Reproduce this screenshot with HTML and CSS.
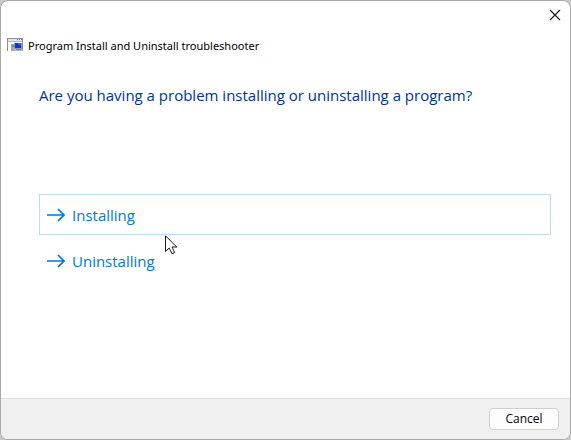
FILE: index.html
```html
<!DOCTYPE html>
<html lang="en">
<head>
    <meta charset="UTF-8" />
    <meta name="viewport" content="width=device-width, initial-scale=1.0" />
    <title>Program Install and Uninstall troubleshooter</title>
    <link rel="stylesheet" href="styles.css">
</head>
<body>
    <main class="dialog">
        <!-- Title bar -->
        <div class="title-bar">
            <button type="button" class="close-btn" aria-label="Close">
                <svg width="12" height="12" viewBox="0 0 12 12" fill="none" stroke="#1a1a1a" stroke-width="1.2">
                    <path d="M1 1L11 11M11 1L1 11" />
                </svg>
            </button>
        </div>

        <header class="dialog-header">
            <svg class="app-icon" width="16" height="14" viewBox="0 0 16 14" shape-rendering="crispEdges">
                <rect width="16" height="13" fill="#8c9097" />
                <rect x="1" y="1" width="14" height="2" fill="#e3e7ec" />
                <rect x="10" y="1" width="1" height="1" fill="#70757d" />
                <rect x="12" y="1" width="1" height="1" fill="#70757d" />
                <rect x="14" y="1" width="1" height="1" fill="#70757d" />
                <rect x="1" y="3" width="14" height="1" fill="#b4b8be" />
                <rect x="1" y="4" width="14" height="9" fill="#fff" />
                <rect x="4" y="6" width="3" height="7" fill="#a4a8ae" />
                <rect x="5" y="7" width="2" height="2" fill="#20c020" />
                <rect x="7" y="5" width="8" height="6" fill="#8495d8" />
                <rect x="8" y="5" width="6" height="5" fill="#1730c5" />
                <rect x="11" y="5" width="3" height="2" fill="#405be8" />
                <rect x="7" y="11" width="8" height="2" fill="#b9bdc6" />
                <rect x="9" y="11" width="5" height="1" fill="#777d8c" />
            </svg>
            <span>Program Install and Uninstall troubleshooter</span>
        </header>

        <!-- Question -->
        <section class="dialog-content">
            <h1 class="question">Are you having a problem installing or uninstalling a program?</h1>
            <div class="choices">
                <button type="button" class="choice active">
                    <svg width="18" height="14" viewBox="0 0 18 14" fill="none" stroke="#0078d7" stroke-width="1.7">
                        <path d="M0 7H17M11 1L17 7L11 13" />
                    </svg>
                    <span>Installing</span>
                </button>
                <button type="button" class="choice">
                    <svg width="18" height="14" viewBox="0 0 18 14" fill="none" stroke="#0078d7" stroke-width="1.7">
                        <path d="M0 7H17M11 1L17 7L11 13" />
                    </svg>
                    <span>Uninstalling</span>
                </button>
                <svg class="cursor" width="13" height="20" viewBox="0 0 13 20" fill="#fff" stroke="#1b1b26" stroke-width="1">
                    <path d="M.5 .9V16.5L4.2 13L7 18.8L9.7 17.5L7 12H11.8Z" />
                </svg>
            </div>
        </section>

        <footer class="dialog-footer">
            <button type="button" class="cancel-btn">Cancel</button>
        </footer>
    </main>
</body>
</html>
```

FILE: styles.css
```css
* {
    box-sizing: border-box;
    margin: 0;
    padding: 0;
}

body {
    background: #c8c8c8;
    color: #000;
    font-family: 'Open Sans', 'Noto Sans', sans-serif;
    font-size: 11px;
}

button {
    font-family: inherit;
    cursor: default;
}

/* Dialog window */
.dialog {
    display: flex;
    flex-direction: column;
    min-height: 100vh;
    background: #fff;
    border: 1px solid #a9a9a9;
    border-radius: 8px;
    overflow: hidden;
}

.title-bar {
    display: flex;
    justify-content: flex-end;
    height: 28px;
}

.close-btn {
    display: flex;
    align-items: center;
    justify-content: center;
    width: 30px;
    height: 28px;
    background: none;
    border: none;
}

.dialog-header {
    display: flex;
    align-items: center;
    gap: 5px;
    height: 32px;
    padding-left: 6px;
    font-family: 'Noto Sans', sans-serif;
}

.dialog-content {
    flex: 1;
    padding: 24px 19px 24px 38px;
}

.question {
    color: #003399;
    font-size: 15px;
    font-weight: 400;
    line-height: 20px;
}

/* Command links */
.choices {
    position: relative;
    display: flex;
    flex-direction: column;
    gap: 5px;
    margin-top: 89px;
}

.choice {
    display: flex;
    align-items: center;
    gap: 7px;
    height: 41px;
    padding: 0 7px;
    background: none;
    border: 1px solid transparent;
    color: #0078d7;
    font-size: 15px;
    line-height: 20px;
}

.choice.active {
    border-color: #b9dcf3;
}

/* Mouse pointer over the choices */
.cursor {
    position: absolute;
    top: 41px;
    left: 126px;
}

.dialog-footer {
    display: flex;
    justify-content: flex-end;
    padding: 9px 11px;
    background: #f0f0f0;
    border-top: 1px solid #dfdfdf;
}

.cancel-btn {
    width: 70px;
    height: 22px;
    background: #fdfdfd;
    border: 1px solid #d0d0d0;
    border-radius: 4px;
    color: #000;
    font-size: 12px;
    line-height: 16px;
}
```
